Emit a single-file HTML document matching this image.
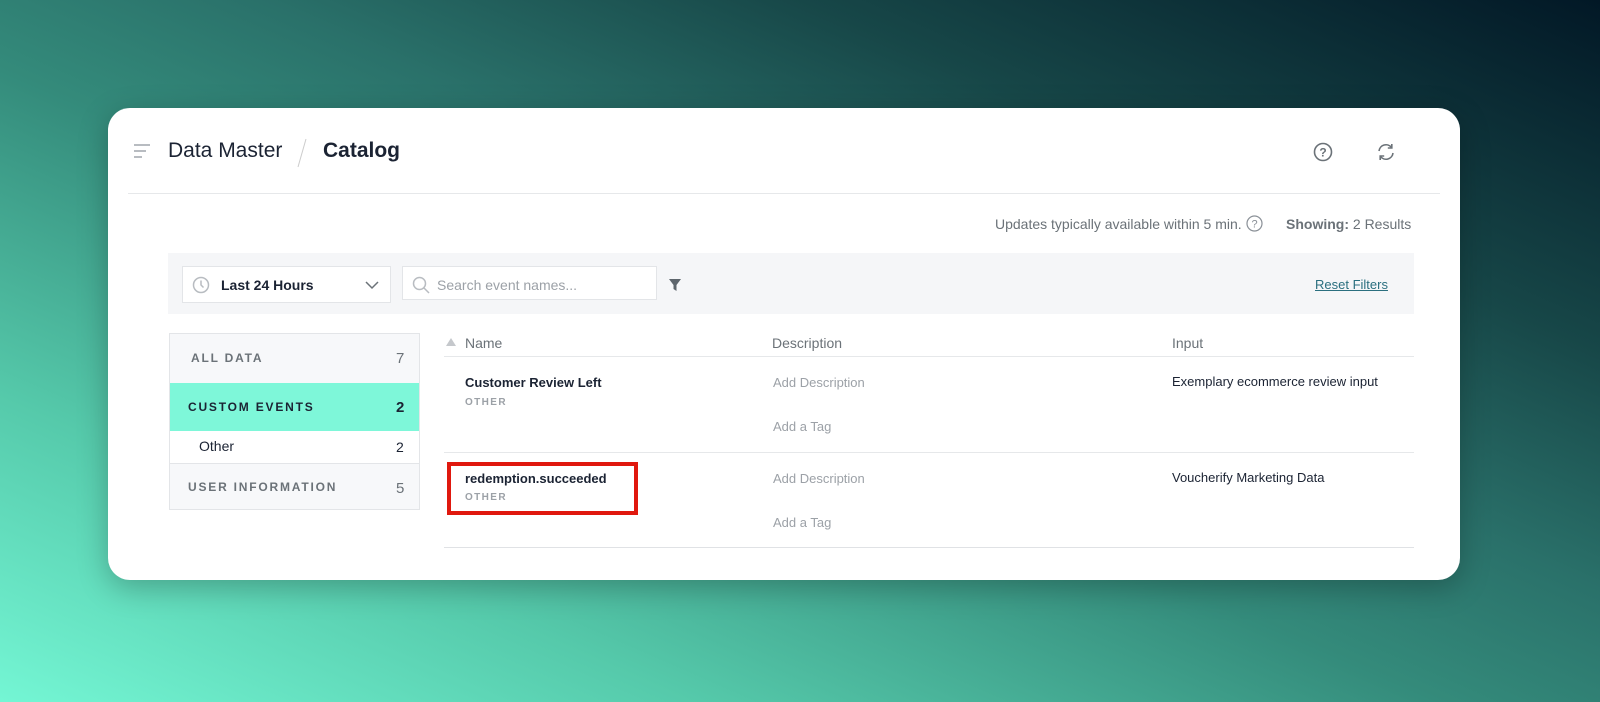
<!DOCTYPE html>
<html><head><meta charset="utf-8"><style>
*{box-sizing:border-box;margin:0;padding:0}
body{width:1600px;height:702px;overflow:hidden;font-family:"Liberation Sans",sans-serif;
background:linear-gradient(to top right,#74f6d4 0%,#55c9aa 22%,#348b7b 45%,#2a716a 58%,#174748 75%,#021826 100%);position:relative}
.card{position:absolute;left:108px;top:108px;width:1352px;height:472px;background:#fff;border-radius:22px;box-shadow:0 8px 30px rgba(0,0,0,.25)}
.a{position:absolute;white-space:nowrap}
.dark{color:#1b2333}
.muted{color:#8a9097}
.cap{font-size:12px;letter-spacing:1.8px;font-weight:bold}
</style></head><body>
<div class="card">
<svg class="a" style="left:26px;top:36px" width="18" height="14"><g stroke="#b8bcc1" stroke-width="2"><line x1="0" y1="1" x2="16" y2="1"/><line x1="0" y1="7" x2="12" y2="7"/><line x1="0" y1="13" x2="8" y2="13"/></g></svg>
<div class="a dark" style="left:60px;top:31px;font-size:21px">Data Master</div>
<svg class="a" style="left:188px;top:30px" width="12" height="30"><line x1="10" y1="1" x2="2" y2="29" stroke="#ccc" stroke-width="1"/></svg>
<div class="a dark" style="left:215px;top:31px;font-size:21px;font-weight:bold">Catalog</div>
<svg class="a" style="left:1205px;top:34px" width="20" height="20"><circle cx="10" cy="10" r="8.5" fill="none" stroke="#6b7278" stroke-width="1.6"/><text x="10" y="14.5" font-size="12" font-weight="bold" text-anchor="middle" fill="#6b7278" font-family="Liberation Sans">?</text></svg>
<svg class="a" style="left:1268px;top:34px" width="20" height="20" fill="none" stroke="#6b7278" stroke-width="1.6"><path d="M3 9a7 7 0 0 1 12.5-3.5M17 11a7 7 0 0 1-12.5 3.5"/><path d="M15.8 2v4h-4M4.2 18v-4h4"/></svg>
<div class="a" style="left:20px;top:85px;width:1312px;height:1px;background:#e6e8ea"></div>
<div class="a" style="left:887px;top:108px;font-size:14px;color:#6b7278">Updates typically available within 5 min.</div>
<svg class="a" style="left:1138px;top:107px" width="17" height="17"><circle cx="8.5" cy="8.5" r="7.5" fill="none" stroke="#8a9097" stroke-width="1.2"/><text x="8.5" y="12.5" font-size="11" text-anchor="middle" fill="#8a9097" font-family="Liberation Sans">?</text></svg>
<div class="a" style="left:1178px;top:108px;font-size:14px;color:#6b7278"><b>Showing:</b> 2 Results</div>
<div class="a" style="left:60px;top:145px;width:1246px;height:61px;background:#f5f6f8"></div>
<div class="a" style="left:74px;top:158px;width:209px;height:37px;background:#fff;border:1px solid #e3e5e8"></div>
<svg class="a" style="left:84px;top:168px" width="18" height="18" fill="none" stroke="#b8bcc1" stroke-width="1.5"><circle cx="9" cy="9" r="7.5"/><path d="M9 4.5V9l2.5 2.5"/></svg>
<div class="a dark" style="left:113px;top:169px;font-size:14px;font-weight:bold">Last 24 Hours</div>
<svg class="a" style="left:257px;top:173px" width="14" height="9"><path d="M1 1l6 6 6-6" fill="none" stroke="#6b7278" stroke-width="1.5"/></svg>
<div class="a" style="left:294px;top:158px;width:255px;height:34px;background:#fff;border:1px solid #e3e5e8"></div>
<svg class="a" style="left:304px;top:168px" width="18" height="18" fill="none" stroke="#b8bcc1" stroke-width="1.5"><circle cx="7.5" cy="7.5" r="6"/><path d="M12 12l5 5"/></svg>
<div class="a" style="left:329px;top:169px;font-size:14px;color:#9ca1a7">Search event names...</div>
<svg class="a" style="left:560px;top:170px" width="14" height="14"><path d="M1 1h12L8.5 7v6L5.5 11V7z" fill="#5d656c"/></svg>
<div class="a" style="left:1207px;top:169px;font-size:13px;color:#2a6f7f;text-decoration:underline">Reset Filters</div>
<div class="a" style="left:61px;top:225px;width:251px;height:177px;border:1px solid #e3e5e8;background:#f7f8fa"></div>
<div class="a cap" style="left:83px;top:243px;color:#6b7278">ALL DATA</div>
<div class="a" style="left:288px;top:242px;font-size:15px;color:#6b7278">7</div>
<div class="a" style="left:62px;top:275px;width:249px;height:48px;background:#7ef7d9"></div>
<div class="a cap dark" style="left:80px;top:292px">CUSTOM EVENTS</div>
<div class="a dark" style="left:288px;top:291px;font-size:15px;font-weight:bold">2</div>
<div class="a" style="left:62px;top:323px;width:249px;height:33px;background:#fff;border-bottom:1px solid #e3e5e8"></div>
<div class="a dark" style="left:91px;top:330px;font-size:14px">Other</div>
<div class="a dark" style="left:288px;top:331px;font-size:14px">2</div>
<div class="a cap" style="left:80px;top:372px;color:#6b7278">USER INFORMATION</div>
<div class="a" style="left:288px;top:372px;font-size:15px;color:#6b7278">5</div>
<svg class="a" style="left:338px;top:230px" width="10" height="8"><path d="M5 0l5 8H0z" fill="#c5c8cc"/></svg>
<div class="a" style="left:357px;top:227px;font-size:14px;color:#6b7278">Name</div>
<div class="a" style="left:664px;top:227px;font-size:14px;color:#6b7278">Description</div>
<div class="a" style="left:1064px;top:227px;font-size:14px;color:#6b7278">Input</div>
<div class="a" style="left:336px;top:248px;width:970px;height:1px;background:#e6e8ea"></div>
<div class="a dark" style="left:357px;top:267px;font-size:13px;font-weight:bold">Customer Review Left</div>
<div class="a cap" style="left:357px;top:289px;font-size:10px;color:#9ca1a7;letter-spacing:1.4px">OTHER</div>
<div class="a" style="left:665px;top:267px;font-size:13px;color:#9ca1a7">Add Description</div>
<div class="a" style="left:665px;top:311px;font-size:13px;color:#9ca1a7">Add a Tag</div>
<div class="a dark" style="left:1064px;top:266px;font-size:13px">Exemplary ecommerce review input</div>
<div class="a" style="left:336px;top:344px;width:970px;height:1px;background:#e6e8ea"></div>
<div class="a" style="left:339px;top:354px;width:191px;height:53px;border:4px solid #e0180e"></div>
<div class="a dark" style="left:357px;top:363px;font-size:13px;font-weight:bold">redemption.succeeded</div>
<div class="a cap" style="left:357px;top:384px;font-size:10px;color:#9ca1a7;letter-spacing:1.4px">OTHER</div>
<div class="a" style="left:665px;top:363px;font-size:13px;color:#9ca1a7">Add Description</div>
<div class="a" style="left:665px;top:407px;font-size:13px;color:#9ca1a7">Add a Tag</div>
<div class="a dark" style="left:1064px;top:362px;font-size:13px">Voucherify Marketing Data</div>
<div class="a" style="left:336px;top:439px;width:970px;height:1px;background:#e0e2e5"></div>
</div>
</body></html>
